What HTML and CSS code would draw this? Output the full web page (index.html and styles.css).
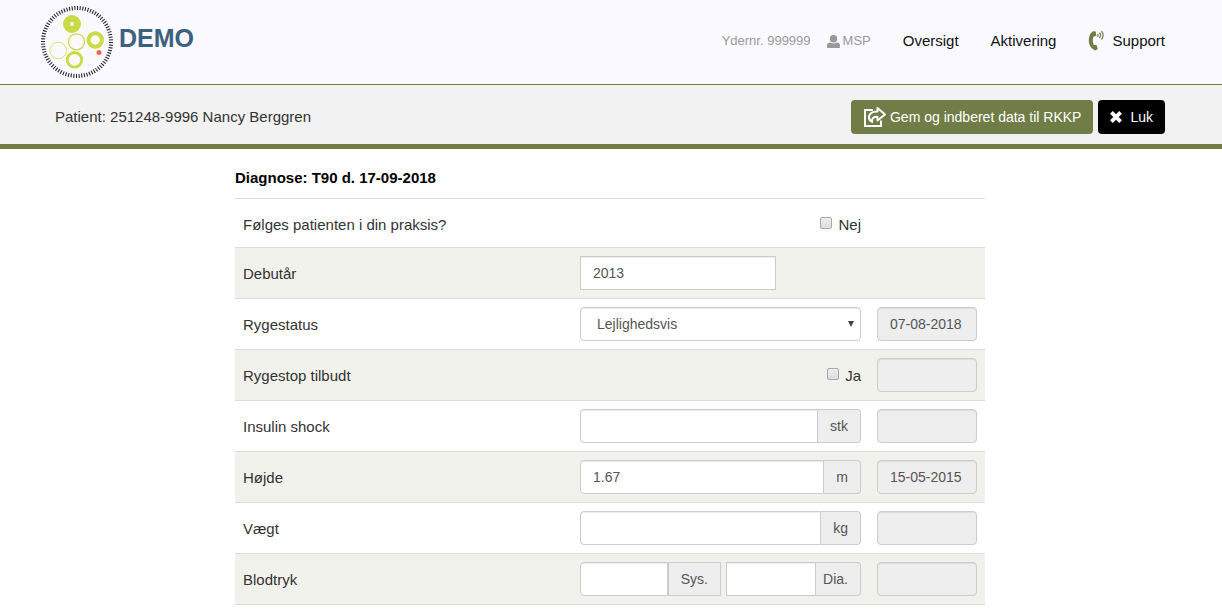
FILE: index.html
```
<!DOCTYPE html>
<html lang="da">
<head>
    <meta charset="UTF-8">
    <meta name="viewport" content="width=device-width, initial-scale=1.0">
    <title>Diagnose</title>
    <link rel="stylesheet" href="styles.css">
</head>
<body>

    <header class="site-header">
        <div class="container header-inner">
            <a href="#" class="brand">
                <svg class="brand-logo" width="74" height="74" viewBox="0 0 74 74" aria-hidden="true">
                    <circle cx="37" cy="37" r="34" fill="none" stroke="#222" stroke-width="4" pathLength="160" stroke-dasharray="0.8 1.2"/>
                    <circle cx="32" cy="19" r="5.5" fill="none" stroke="#cadb45" stroke-width="7"/>
                    <circle cx="55.3" cy="35" r="6.7" fill="none" stroke="#cadb45" stroke-width="4"/>
                    <circle cx="36.5" cy="36.8" r="8" fill="none" stroke="#cadb45" stroke-width="1.3"/>
                    <circle cx="18.2" cy="45.5" r="8.3" fill="none" stroke="#d3e26a" stroke-width="0.9"/>
                    <circle cx="34.5" cy="54.8" r="7.3" fill="none" stroke="#cadb45" stroke-width="2.8"/>
                    <circle cx="59" cy="47.4" r="2.5" fill="#f4694b"/>
                </svg>
                <span class="brand-name">DEMO</span>
            </a>
            <nav class="main-nav">
                <span class="nav-info">Ydernr. 999999</span>
                <span class="nav-info nav-user">
                    <svg width="13" height="13" viewBox="0 0 13 13" fill="#999" aria-hidden="true">
                        <circle cx="6.5" cy="3.700" r="3.700"/>
                        <path d="M0 12v-1.500C0 8.800 1.300 7.700 3.300 7.600c2 1.200 4.400 1.200 6.400 0 2 .1 3.300 1.200 3.300 2.900V12q0 .9-.8.9H.8Q0 12.900 0 12z"/>
                    </svg>
                    MSP
                </span>
                <a href="#" class="nav-link">Oversigt</a>
                <a href="#" class="nav-link">Aktivering</a>
                <a href="#" class="nav-link nav-support">
                    <svg width="17" height="22" viewBox="0 0 17 22" aria-hidden="true">
                        <path fill="#707d46" d="M4.500 1.500 7 1.200q.7 0 .8.7l.4 3.200q0 .7-.6.9l-2.200.8c-1 2.800-.8 5.600.4 8.200l2-.2q.7 0 .9.6l.9 3q.2.7-.4 1l-2.200 1C3 18.500.8 15 .8 10.500.8 6.500 2 3.500 4.500 1.500z"/>
                        <path fill="none" stroke="#707d46" stroke-width="1.200" d="M9.500 4q1 1.300 0 2.800M11.500 2.600q2 2.700 0 5.600M13.500 1.200q3.200 4 0 8.400"/>
                    </svg>
                    Support
                </a>
            </nav>
        </div>
    </header>

    <div class="patient-bar">
        <div class="container patient-inner">
            <span class="patient-name">Patient: 251248-9996 Nancy Berggren</span>
            <div class="actions">
                <button type="button" class="btn btn-save">
                    <svg width="23" height="22" viewBox="0 0 23 22" fill="none" stroke="#fff" stroke-width="2" aria-hidden="true">
                        <path d="M10 4H2v16h16v-5.500"/>
                        <path stroke-linejoin="round" d="M14.500 2 22 8.500l-7.500 6v-3.700c-3.600-.2-6 .8-5.300 5.200C3.500 12.500 5.500 5.500 14.500 5.500z"/>
                    </svg>
                    Gem og indberet data til RKKP
                </button>
                <button type="button" class="btn btn-close">
                    <svg width="12" height="12" viewBox="0 0 12 12" aria-hidden="true">
                        <path stroke="#fff" stroke-width="3.800" d="m1.400 1.400 9.200 9.200M10.600 1.400l-9.200 9.200"/>
                    </svg>
                    Luk
                </button>
            </div>
        </div>
    </div>

    <main class="content">
        <h1 class="diagnose">Diagnose: T90 d. 17-09-2018</h1>
        <form>
            <table class="form-table">
                <tbody>
                    <tr>
                        <th scope="row">Følges patienten i din praksis?</th>
                        <td class="check-cell"><label class="check"><input type="checkbox">Nej</label></td>
                        <td class="date-cell"></td>
                    </tr>
                    <tr>
                        <th scope="row"><label for="debut">Debutår</label></th>
                        <td><input type="text" id="debut" class="field field-year" value="2013"></td>
                        <td class="date-cell"></td>
                    </tr>
                    <tr>
                        <th scope="row"><label for="ryge">Rygestatus</label></th>
                        <td>
                            <div class="select-wrap">
                                <select id="ryge" class="field">
                                    <option>Lejlighedsvis</option>
                                </select>
                            </div>
                        </td>
                        <td class="date-cell"><input type="text" class="field" value="07-08-2018" aria-label="Dato for rygestatus" disabled></td>
                    </tr>
                    <tr>
                        <th scope="row">Rygestop tilbudt</th>
                        <td class="check-cell"><label class="check"><input type="checkbox">Ja</label></td>
                        <td class="date-cell"><input type="text" class="field" aria-label="Dato for rygestop" disabled></td>
                    </tr>
                    <tr>
                        <th scope="row"><label for="shock">Insulin shock</label></th>
                        <td>
                            <div class="group">
                                <input type="text" id="shock" class="field">
                                <span class="unit">stk</span>
                            </div>
                        </td>
                        <td class="date-cell"><input type="text" class="field" aria-label="Dato for insulin shock" disabled></td>
                    </tr>
                    <tr>
                        <th scope="row"><label for="hojde">Højde</label></th>
                        <td>
                            <div class="group">
                                <input type="text" id="hojde" class="field" value="1.67">
                                <span class="unit">m</span>
                            </div>
                        </td>
                        <td class="date-cell"><input type="text" class="field" value="15-05-2015" aria-label="Dato for højde" disabled></td>
                    </tr>
                    <tr>
                        <th scope="row"><label for="vaegt">Vægt</label></th>
                        <td>
                            <div class="group">
                                <input type="text" id="vaegt" class="field">
                                <span class="unit">kg</span>
                            </div>
                        </td>
                        <td class="date-cell"><input type="text" class="field" aria-label="Dato for vægt" disabled></td>
                    </tr>
                    <tr>
                        <th scope="row"><label for="sys">Blodtryk</label></th>
                        <td>
                            <div class="pressure">
                                <div class="group group-sys">
                                    <input type="text" id="sys" class="field">
                                    <span class="unit">Sys.</span>
                                </div>
                                <div class="group group-dia">
                                    <input type="text" class="field" aria-label="Diastolisk">
                                    <span class="unit">Dia.</span>
                                </div>
                            </div>
                        </td>
                        <td class="date-cell"><input type="text" class="field" aria-label="Dato for blodtryk" disabled></td>
                    </tr>
                </tbody>
            </table>
        </form>
    </main>

</body>
</html>
```

FILE: styles.css
```
* {
    box-sizing: border-box;
}

body {
    margin: 0;
    font-family: "Liberation Sans", Arial, Helvetica, sans-serif;
    font-size: 15px;
    line-height: 20px;
    color: #333;
    background-color: #fff;
}

a {
    color: inherit;
    text-decoration: none;
}

.container {
    max-width: 1170px;
    margin: 0 auto;
    padding: 0 31px 0 29px;
    display: flex;
    align-items: center;
    justify-content: space-between;
}

/* top */
.site-header {
    background-color: #f9f9ff;
    border-bottom: 1px solid #707d46;
}

.header-inner {
    height: 84px;
    padding-left: 14px;
    padding-bottom: 1px;
}

.brand {
    display: flex;
    align-items: center;
    gap: 5px;
}

.brand-name {
    font-size: 25px;
    line-height: 32px;
    font-weight: bold;
    color: #3b617f;
    padding-bottom: 8px;
}

.main-nav {
    display: flex;
    align-items: center;
    color: #111;
    padding-bottom: 1px;
}

.nav-info {
    font-size: 13px;
    color: #999;
    margin-right: 16px;
}

.nav-user {
    display: flex;
    align-items: center;
    gap: 3px;
    margin-right: 0;
}

.nav-link {
    margin-left: 32px;
}

.nav-support {
    display: flex;
    align-items: center;
    gap: 7px;
}

/* patient */
.patient-bar {
    background-color: #f2f2f2;
    border-bottom: 5px solid #707d46;
}

.patient-inner {
    padding-top: 15px;
    padding-bottom: 10px;
}

.actions {
    display: flex;
    gap: 5px;
}

.btn {
    display: flex;
    align-items: center;
    height: 34px;
    padding: 0 12px;
    border: none;
    border-radius: 4px;
    font-family: inherit;
    font-size: 14px;
    color: #fff;
    cursor: pointer;
}

.btn-save {
    background-color: #707d46;
    gap: 4px;
}

.btn-close {
    background-color: #000;
    gap: 8px;
}

/* form */
.content {
    max-width: 752px;
    margin: 0 auto;
    padding: 19px 2px 0 0;
}

.diagnose {
    margin: 0 0 10px;
    font-size: 15px;
    line-height: 20px;
    font-weight: bold;
    color: #000;
}

.form-table {
    width: 100%;
    border-spacing: 0;
    table-layout: fixed;
    border-bottom: 1px solid #ddd;
}

.form-table th,
.form-table td {
    height: 51px;
    padding: 8px;
    border-top: 1px solid #ddd;
    text-align: left;
    font-weight: normal;
}

.form-table th {
    width: 337px;
    padding-top: 10px;
}

.form-table .date-cell {
    width: 116px;
}

.form-table tr:first-child th,
.form-table tr:first-child td {
    height: 49px;
    padding-top: 11px;
}

.form-table tr:nth-child(even) {
    background-color: #f1f2ec;
}

.form-table .check-cell {
    text-align: right;
}

.check {
    display: inline-flex;
    align-items: center;
    gap: 6px;
}

.check input {
    appearance: none;
    width: 12px;
    height: 12px;
    margin: 0 0 4px;
    border: 1px solid #a9a9a9;
    border-radius: 2px;
    background-image: linear-gradient(#ededed, #dedede);
}

.field {
    display: block;
    width: 100%;
    height: 34px;
    padding: 6px 12px;
    border: 1px solid #ccc;
    border-radius: 4px;
    background-color: #fff;
    box-shadow: inset 0 1px 1px rgba(0, 0, 0, 0.075);
    font-family: inherit;
    font-size: 14px;
    color: #555;
}

.field:disabled {
    background-color: #eee;
}

.field-year {
    width: 196px;
    border-radius: 0;
}

.select-wrap {
    display: grid;
    align-items: center;
}

.select-wrap .field {
    grid-area: 1 / 1;
    appearance: none;
    padding-left: 16px;
}

/* arrow */
.select-wrap::after {
    content: "";
    grid-area: 1 / 1;
    justify-self: end;
    margin-right: 7px;
    border: 3px solid transparent;
    border-top: 6px solid #444;
    border-bottom: 0;
    z-index: 1;
    pointer-events: none;
}

.group {
    display: flex;
}

.group .field {
    flex: 1;
    min-width: 0;
    border-radius: 4px 0 0 4px;
}

.unit {
    height: 34px;
    padding: 6px 12px;
    border: 1px solid #ccc;
    border-left: 0;
    border-radius: 0 4px 4px 0;
    background-color: #eee;
    font-size: 14px;
    color: #555;
}

.pressure {
    display: grid;
    grid-template-columns: 141px 1fr;
    gap: 5px;
}

.group-sys .unit {
    border-left: 1px solid #ccc;
    border-radius: 0;
}

.group-dia .field {
    border-radius: 0;
}

.group-dia .unit {
    padding-left: 7px;
}
```
